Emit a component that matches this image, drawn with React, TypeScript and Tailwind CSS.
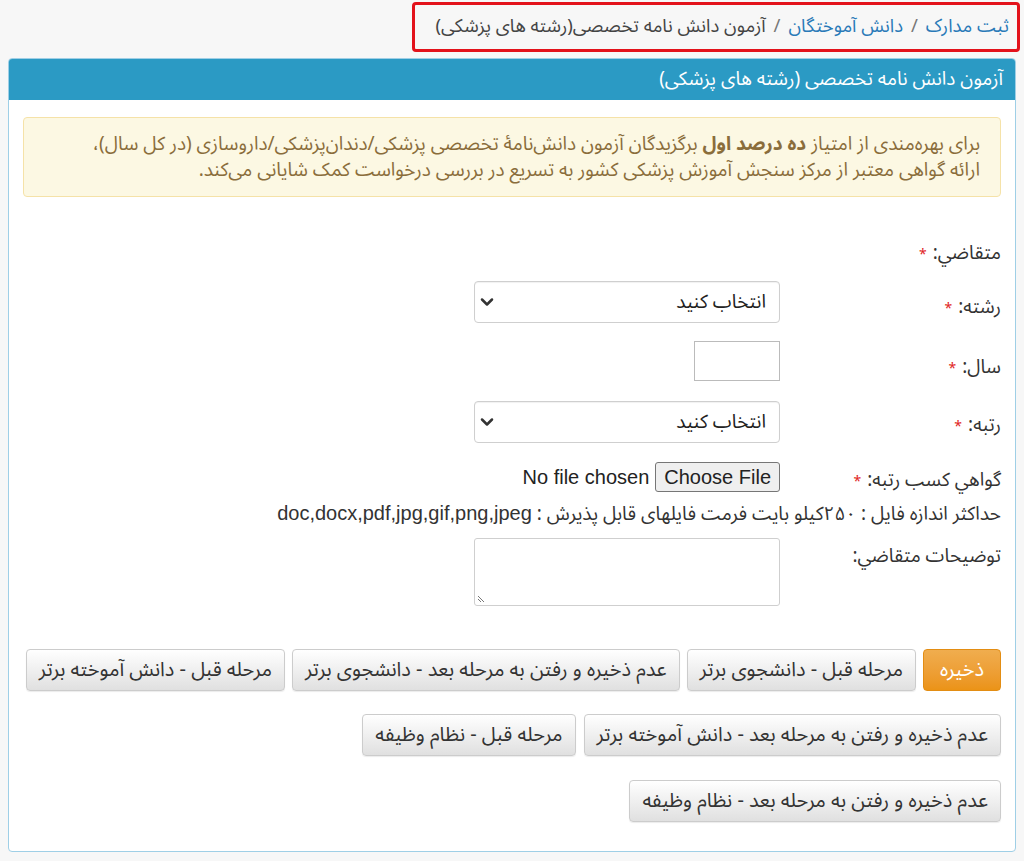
import { ChevronDown } from 'lucide-react';

const font = "font-['Noto_Sans_Arabic','DejaVu_Sans',sans-serif]";

const Star = () => <span className="mr-[6px] text-[14px] leading-none text-[#e02424]">*</span>;

function Select() {
  return (
    <div className="flex h-[42px] w-[306px] items-center justify-between rounded-[4px] border border-[#cfcfcf] bg-white pl-[2px] pr-[13px] shadow-[inset_0_1px_1px_rgba(0,0,0,0.06)]">
      <span className="text-[19px] leading-[24px] text-[#222]">انتخاب کنید</span>
      <ChevronDown size={20} strokeWidth={3} className="text-[#333]" />
    </div>
  );
}

function Row({ label, required, top = 'pt-2', children }: { label: string; required?: boolean; top?: string; children?: React.ReactNode }) {
  return (
    <div className="flex items-start">
      <div className={`w-[221px] shrink-0 text-right text-[19px] leading-[24px] text-[#333] ${top}`}>
        {label}
        {required && <Star />}
      </div>
      <div>{children}</div>
    </div>
  );
}

const btn =
  'h-[42px] shrink-0 whitespace-nowrap rounded-[4px] border border-[#ccc] bg-gradient-to-b from-white to-[#e0e0e0] px-[12px] text-[20px] leading-[24px] text-[#333] shadow-[0_1px_1px_rgba(0,0,0,0.08)]';

export default function App() {
  return (
    <div dir="rtl" className={`min-h-[861px] bg-[#f7f7f7] pb-[9px] ${font}`}>
      <div className="flex pr-1 pt-[2px]">
        <div className="flex h-[50px] w-[608px] items-center rounded-[4px] border-[3px] border-[#e3121b] bg-[#f7f7f7] px-[8px] text-[18.5px]">
          <span className="text-[#2a7ab8]">ثبت مدارک</span>
          <span className="mx-2 text-[#777]">/</span>
          <span className="text-[#2a7ab8]">دانش آموختگان</span>
          <span className="mx-2 text-[#777]">/</span>
          <span className="text-[#444]">آزمون دانش نامه تخصصی(رشته های پزشکی)</span>
        </div>
      </div>

      <div className="mx-[8px] mt-[6px] overflow-hidden rounded-[4px] border border-[#9fcfe6] bg-white pb-[29px]">
        <div className="flex h-[41px] items-center bg-[#2b9ac4] px-[12px] text-[19px] text-white">
          آزمون دانش نامه تخصصی (رشته های پزشکی)
        </div>

        <div className="px-[14px] pt-[17px]">
          <div className="rounded-[4px] border border-[#f5e2a8] bg-[#fcf8e3] px-[20px] py-[13px] text-[19px] leading-[26px] text-[#8a6d3b]">
            برای بهره‌مندی از امتیاز <b>ده درصد اول</b> برگزیدگان آزمون دانش‌نامهٔ تخصصی پزشکی/دندان‌پزشکی/داروسازی (در کل سال)،
            <br />
            ارائه گواهی معتبر از مرکز سنجش آموزش پزشکی کشور به تسریع در بررسی درخواست کمک شایانی می‌کند.
          </div>

          <div className="mt-[44px] flex flex-col">
            <Row label="متقاضي:" required top="pt-0" />
            <div className="mt-[16px]">
              <Row label="رشته:" required top="pt-[14px]">
                <Select />
              </Row>
            </div>
            <div className="mt-[18px]">
              <Row label="سال:" required top="pt-[14px]">
                <div className="h-[40px] w-[86px] border border-[#bbb] bg-white" />
              </Row>
            </div>
            <div className="mt-[20px]">
              <Row label="رتبه:" required top="pt-[12px]">
                <Select />
              </Row>
            </div>
            <div className="mt-[19px]">
              <Row label="گواهي کسب رتبه:" required top="pt-[6px]">
                <div className="flex h-[30px] items-center gap-[6px] font-['Liberation_Sans',sans-serif] text-[20px] leading-none text-[#222]">
                  <span className="flex h-[30px] items-center rounded-[3px] border border-[#767676] bg-[#efefef] px-[8px]">Choose File</span>
                  <span>No file chosen</span>
                </div>
              </Row>
            </div>
            <div className="mt-[10px] h-[24px] text-right text-[19px] leading-[24px] text-[#333]">
              حداکثر اندازه فایل : ۲۵۰کیلو بایت فرمت فایلهای قابل پذیرش : <span className="font-['Liberation_Sans',sans-serif] text-[20px] leading-none">doc,docx,pdf,jpg,gif,png,jpeg</span>
            </div>
            <div className="mt-[12px]">
              <Row label="توضيحات متقاضي:" top="pt-[6px]">
                <div className="relative h-[68px] w-[306px] rounded-[3px] border border-[#cfcfcf] bg-white">
                  <svg className="absolute bottom-[2px] left-[2px]" width="8" height="8" viewBox="0 0 8 8">
                    <path d="M1 1L7 7M1 4L4 7" stroke="#777" strokeWidth="1" />
                  </svg>
                </div>
              </Row>
            </div>
          </div>

          <div className="mt-[43px] flex gap-[7px]">
            <button className="h-[42px] shrink-0 rounded-[4px] border border-[#e38d13] bg-gradient-to-b from-[#f0ad4e] to-[#eb9316] px-[16px] text-[20px] leading-[24px] text-white">
              ذخیره
            </button>
            <button className={btn}>مرحله قبل - دانشجوی برتر</button>
            <button className={btn}>عدم ذخیره و رفتن به مرحله بعد - دانشجوی برتر</button>
            <button className={btn}>مرحله قبل - دانش آموخته برتر</button>
          </div>
          <div className="mt-[23px] flex gap-[8px]">
            <button className={btn}>عدم ذخیره و رفتن به مرحله بعد - دانش آموخته برتر</button>
            <button className={btn}>مرحله قبل - نظام وظیفه</button>
          </div>
          <div className="mt-[24px] flex">
            <button className={btn}>عدم ذخیره و رفتن به مرحله بعد - نظام وظیفه</button>
          </div>
        </div>
      </div>
    </div>
  );
}
